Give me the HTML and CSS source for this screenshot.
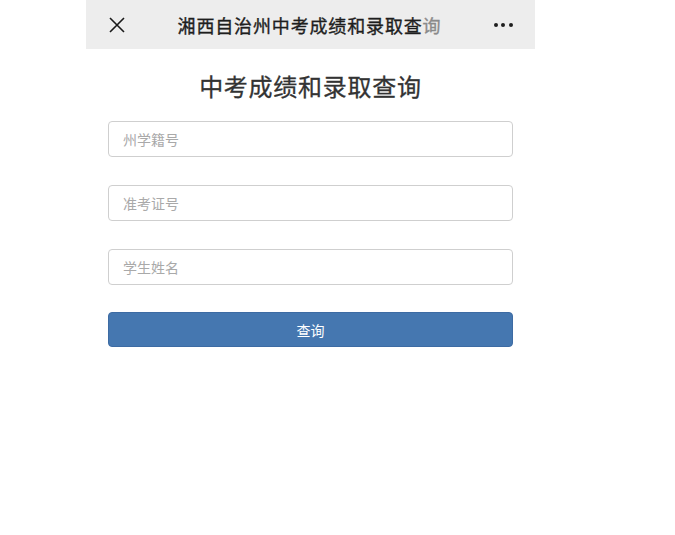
FILE: index.html
```html
<!DOCTYPE html>
<html lang="zh-CN">
<head>
<meta charset="utf-8">
<title>中考成绩和录取查询</title>
<link rel="stylesheet" href="styles.css">
</head>
<body>
<div class="page">
  <header class="topbar">
    <svg class="close" width="16" height="16" viewBox="0 0 16 16"><path d="M1 1L15 15M15 1L1 15" stroke="#1a1a1a" stroke-width="1.6" fill="none"/></svg>
    <div class="title">湘西自治州中考成绩和录取查<span class="fade">询</span></div>
    <div class="more"><span></span><span></span><span></span></div>
  </header>
  <main class="content">
    <h1 class="heading">中考成绩和录取查询</h1>
    <form class="form" autocomplete="off">
      <input class="field" type="text" placeholder="州学籍号" spellcheck="false" autocomplete="off">
      <input class="field" type="text" placeholder="准考证号" spellcheck="false" autocomplete="off">
      <input class="field" type="text" placeholder="学生姓名" spellcheck="false" autocomplete="off">
      <button class="btn" type="button">查询</button>
    </form>
  </main>
</div>
</body>
</html>
```
FILE: styles.css
```css
html, body {
  margin: 0;
  padding: 0;
  background: #fff;
}
body {
  font-family: "Noto Sans CJK SC", "Noto Sans", sans-serif;
  padding-left: 86px;
}
.page {
  width: 449px;
}
.topbar {
  height: 49px;
  background: #ededed;
  display: flex;
  align-items: center;
  justify-content: space-between;
  padding: 0 22px 0 23px;
  box-sizing: border-box;
}
.close {
  display: block;
  flex: none;
}
.title {
  font-size: 18px;
  font-weight: 400;
  color: #1e1e1e;
  letter-spacing: 0.85px;
  line-height: 24px;
  -webkit-text-stroke: 0.35px #1e1e1e;
}
.fade {
  color: #8a8a8a;
  -webkit-text-stroke: 0.35px #8a8a8a;
}
.more {
  display: flex;
  gap: 3.5px;
  align-items: center;
}
.more span {
  width: 4px;
  height: 4px;
  border-radius: 50%;
  background: #1e1e1e;
}
.content {
  padding: 0 22px;
}
.heading {
  margin: 20px 0 18px;
  font-size: 24px;
  line-height: 34px;
  font-weight: 400;
  color: #333;
  text-align: center;
  letter-spacing: 0.75px;
  -webkit-text-stroke: 0.3px #333;
}
.form {
  display: flex;
  flex-direction: column;
  gap: 28px;
}
.field {
  height: 36px;
  box-sizing: border-box;
  border: 1px solid #cfcfcf;
  border-radius: 4px;
  padding: 0 14px;
  font-family: inherit;
  font-size: 14px;
  color: #333;
  outline: none;
  margin: 0;
}
.field::placeholder {
  color: #a9a9a9;
}
.btn {
  margin-top: -1px;
  height: 35px;
  border: 1px solid #3d6ba3;
  border-radius: 4px;
  background: #4577b0;
  color: #fff;
  font-family: inherit;
  font-size: 14px;
  padding: 0;
}
```
